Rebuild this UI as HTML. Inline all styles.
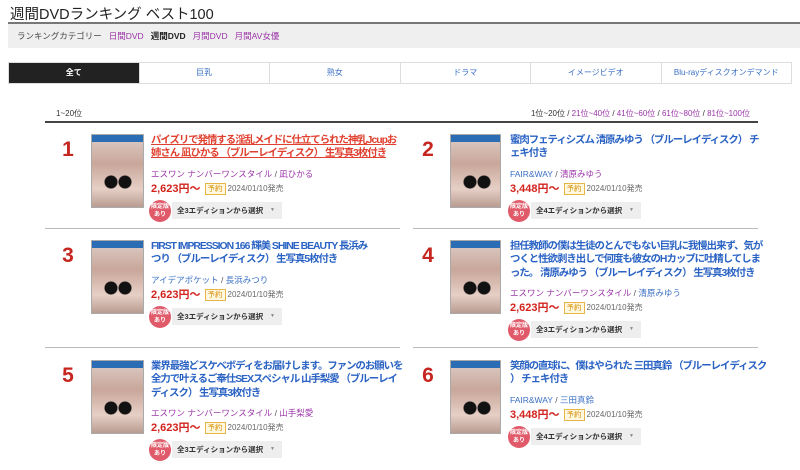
<!DOCTYPE html>
<html><head><meta charset="utf-8"><style>
*{margin:0;padding:0;box-sizing:border-box}
body{width:800px;height:463px;overflow:hidden;background:#fff;font-family:"Liberation Sans","Noto Sans CJK JP",sans-serif;color:#222;position:relative}
.a{position:absolute}
h1{position:absolute;left:10px;top:3px;font-size:14.5px;font-weight:normal;color:#222;white-space:nowrap}
.cat{position:absolute;left:8px;top:22px;width:792px;height:26px;background:#efefef;border-top:2px solid #777;font-size:8.5px;line-height:24px;padding-left:9px;color:#444}
.cat span{margin-right:7px}
.cat .p{color:#9b35a8}
.cat .b{color:#222;font-weight:bold}
.tabs{position:absolute;left:8px;top:62px;width:784px;height:22px;display:flex;border:1px solid #ddd}
.tabs div{flex:1;border-left:1px solid #ddd;text-align:center;font-size:8px;line-height:20px;color:#3a6fc4}
.tabs div:first-child{background:#222;color:#fff;font-weight:bold;border-left:none}
.sm{font-size:8px;color:#333}
.pg .p{color:#9b35a8}
.line{position:absolute;height:1px;background:#bbb}
.it{position:absolute;width:350px;height:110px}
.rk{position:absolute;top:4px;left:0;width:30px;text-align:center;font-size:21px;font-weight:bold;color:#c5261f}
.img{position:absolute;top:0;width:53px;height:74px;background:linear-gradient(180deg,#2a6db5 0,#2a6db5 7px,#d8c4bd 7px,#c9a79a 40%,#e6cfc6 75%,#b99c92 100%);border:1px solid #aaa}
.img:after{content:"";position:absolute;left:12px;top:40px;width:28px;height:14px;background:radial-gradient(circle at 25% 50%,#111 6px,transparent 7px),radial-gradient(circle at 75% 50%,#111 6px,transparent 7px)}
.tx{position:absolute;top:0;width:250px}
.t{font-size:10.4px;letter-spacing:-1px;font-weight:bold;line-height:13.3px;color:#2a63c4;white-space:nowrap}
.t.r{color:#e0402f;text-decoration:underline}
.mk{margin-top:6px;font-size:8.5px;color:#9b35a8;line-height:14px}
.mk i{font-style:normal;color:#555}
.mk u{text-decoration:none;color:#3a6fc4}
.pr{font-size:11px;font-weight:bold;color:#d2231c;line-height:15px}
.pr .y{display:inline-block;font-size:7.5px;font-weight:normal;color:#d88b00;border:1px solid #e8b548;background:#fff8e0;padding:0 2px;line-height:10px;margin-left:4px;vertical-align:1px}
.pr .d{font-size:8px;font-weight:normal;color:#666;vertical-align:1px;margin-left:2px}
.ed{position:relative;margin-top:5px;height:18px}
.bd{position:absolute;left:-2px;top:-2px;width:22px;height:22px;border-radius:50%;background:#e05a6a;color:#fff;font-size:6px;font-weight:bold;text-align:center;line-height:8px;padding-top:3px}
.sel{position:absolute;left:21px;top:0;width:110px;height:17px;background:#eee;font-size:7.5px;font-weight:bold;line-height:17px;padding-left:5px;color:#333}
.sel:after{content:"▼";position:absolute;right:7px;font-size:5px;color:#888}
</style></head><body>
<h1>週間DVDランキング ベスト100</h1>
<div class="cat"><span>ランキングカテゴリー</span><span class="p">日間DVD</span><span class="b">週間DVD</span><span class="p">月間DVD</span><span class="p">月間AV女優</span></div>
<div class="tabs"><div>全て</div><div>巨乳</div><div>熟女</div><div>ドラマ</div><div>イメージビデオ</div><div>Blu-rayディスクオンデマンド</div></div>
<div class="a sm" style="left:56px;top:108px">1~20位</div>
<div class="a sm pg" style="right:50px;top:108px">1位~20位 / <span class="p">21位~40位</span> / <span class="p">41位~60位</span> / <span class="p">61位~80位</span> / <span class="p">81位~100位</span></div>
<div class="a" style="left:45px;top:121px;width:713px;height:2px;background:#444"></div>
<div class="line" style="left:45px;top:228px;width:355px"></div>
<div class="line" style="left:413px;top:228px;width:345px"></div>
<div class="line" style="left:45px;top:347px;width:355px"></div>
<div class="line" style="left:413px;top:347px;width:345px"></div>

<div class="it" style="left:53px;top:134px"><div class="rk">1</div><div class="img" style="left:38px"></div><div class="tx" style="left:98px"><div class="t r">パイズリで発情する淫乱メイドに仕立てられた神乳Jcupお<br>姉さん 凪ひかる （ブルーレイディスク） 生写真3枚付き</div><div class="mk">エスワン ナンバーワンスタイル <i>/</i> 凪ひかる</div><div class="pr">2,623円～<span class="y">予約</span><span class="d">2024/01/10発売</span></div><div class="ed"><div class="bd">限定版<br>あり</div><div class="sel">全3エディションから選択</div></div></div></div>

<div class="it" style="left:413px;top:134px"><div class="rk">2</div><div class="img" style="left:37px;width:51px"></div><div class="tx" style="left:97px"><div class="t">蜜肉フェティシズム 清原みゆう （ブルーレイディスク） チ<br>ェキ付き</div><div class="mk"><u>FAIR&amp;WAY</u> <i>/</i> 清原みゆう</div><div class="pr">3,448円～<span class="y">予約</span><span class="d">2024/01/10発売</span></div><div class="ed"><div class="bd">限定版<br>あり</div><div class="sel">全4エディションから選択</div></div></div></div>

<div class="it" style="left:53px;top:240px"><div class="rk">3</div><div class="img" style="left:38px"></div><div class="tx" style="left:98px"><div class="t">FIRST IMPRESSION 166 輝美 SHINE BEAUTY 長浜み<br>つり （ブルーレイディスク） 生写真5枚付き</div><div class="mk"><u>アイデアポケット</u> <i>/</i> <u>長浜みつり</u></div><div class="pr">2,623円～<span class="y">予約</span><span class="d">2024/01/10発売</span></div><div class="ed"><div class="bd">限定版<br>あり</div><div class="sel">全3エディションから選択</div></div></div></div>

<div class="it" style="left:413px;top:240px"><div class="rk">4</div><div class="img" style="left:37px;width:51px"></div><div class="tx" style="left:97px"><div class="t">担任教師の僕は生徒のとんでもない巨乳に我慢出来ず、気が<br>つくと性欲剥き出しで何度も彼女のHカップに吐精してしま<br>った。 清原みゆう （ブルーレイディスク） 生写真3枚付き</div><div class="mk">エスワン ナンバーワンスタイル <i>/</i> <u>清原みゆう</u></div><div class="pr">2,623円～<span class="y">予約</span><span class="d">2024/01/10発売</span></div><div class="ed"><div class="bd">限定版<br>あり</div><div class="sel">全3エディションから選択</div></div></div></div>

<div class="it" style="left:53px;top:360px"><div class="rk">5</div><div class="img" style="left:38px"></div><div class="tx" style="left:98px"><div class="t">業界最強どスケベボディをお届けします。ファンのお願いを<br>全力で叶えるご奉仕SEXスペシャル 山手梨愛 （ブルーレイ<br>ディスク） 生写真3枚付き</div><div class="mk">エスワン ナンバーワンスタイル <i>/</i> 山手梨愛</div><div class="pr">2,623円～<span class="y">予約</span><span class="d">2024/01/10発売</span></div><div class="ed"><div class="bd">限定版<br>あり</div><div class="sel">全3エディションから選択</div></div></div></div>

<div class="it" style="left:413px;top:360px"><div class="rk">6</div><div class="img" style="left:37px;width:51px"></div><div class="tx" style="left:97px"><div class="t">笑顔の直球に、僕はやられた 三田真鈴 （ブルーレイディスク<br>） チェキ付き</div><div class="mk"><u>FAIR&amp;WAY</u> <i>/</i> <u>三田真鈴</u></div><div class="pr">3,448円～<span class="y">予約</span><span class="d">2024/01/10発売</span></div><div class="ed"><div class="bd">限定版<br>あり</div><div class="sel">全4エディションから選択</div></div></div></div>
</body></html>
